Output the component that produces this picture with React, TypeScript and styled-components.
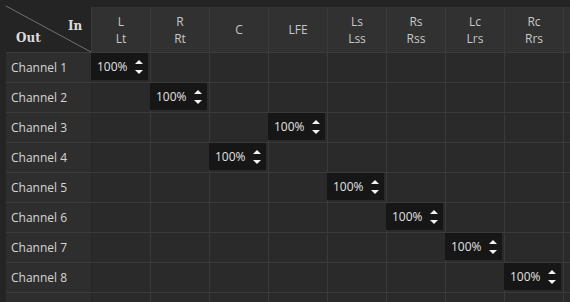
import React from 'react';
import styled, { createGlobalStyle } from 'styled-components';

const GlobalStyle = createGlobalStyle`
  html, body {
    margin: 0;
    padding: 0;
    background: #242424;
  }
  body {
    font-family: 'Open Sans', 'Liberation Sans', sans-serif;
  }
`;

const Page = styled.div`
  width: 570px;
  height: 302px;
  overflow: hidden;
  background: #242424;
  padding: 7px 0 0 6px;
  box-sizing: border-box;
`;

const Matrix = styled.div`
  display: grid;
  grid-template-columns: 85px repeat(9, 58px);
  grid-template-rows: 45px repeat(9, 29px);
  gap: 1px;
  width: max-content;
  background: #3a3a3a;
`;

const Corner = styled.div`
  position: relative;
  margin: -7px 0 0 -6px;
  background: #242424;
  border-right: 1px solid #242424;
  font-family: 'DejaVu Serif', 'Liberation Serif', serif;
  font-weight: bold;
  font-size: 12px;
  color: #dcdcdc;

  svg {
    position: absolute;
    inset: 0;
  }
`;

const CornerLabel = styled.span<{ $top: number; $left: number }>`
  position: absolute;
  top: ${(p) => p.$top}px;
  left: ${(p) => p.$left}px;
`;

const HeadCell = styled.div`
  display: flex;
  flex-direction: column;
  align-items: center;
  justify-content: center;
  background: #313131;
  color: #c8c8c8;
  font-size: 12px;
  line-height: 17px;
`;

const RowLabel = styled.div`
  display: flex;
  align-items: center;
  padding-left: 5px;
  background: #2e2e2e;
  color: #d6d6d6;
  font-size: 12px;
  border-right: 1px solid #242424;
  margin-right: -1px;
`;

const Cell = styled.div`
  position: relative;
  background: #2a2a2a;
`;

const Spin = styled.div`
  position: absolute;
  top: 0;
  left: -1px;
  width: 57px;
  height: 27px;
  display: flex;
  align-items: center;
  background: #161616;
  color: #e2e2e2;
  font-size: 12px;
  padding-left: 6px;
  box-sizing: border-box;
`;

const Arrows = styled.svg`
  margin-left: 7px;
`;

const inputs = [
  ['L', 'Lt'],
  ['R', 'Rt'],
  ['C'],
  ['LFE'],
  ['Ls', 'Lss'],
  ['Rs', 'Rss'],
  ['Lc', 'Lrs'],
  ['Rc', 'Rrs'],
  [''],
];

// output channel -> input column routed at 100%
const routing = [0, 1, 3, 2, 4, 5, 6, 7];

const SpinBox = ({ value }: { value: string }) => (
  <Spin>
    {value}
    <Arrows width="8" height="16" viewBox="0 0 8 16">
      <path d="M4 1 L8 5 H0 Z" fill="#f2f2f2" />
      <path d="M0 11 H8 L4 15 Z" fill="#f2f2f2" />
    </Arrows>
  </Spin>
);

const App = () => {
  const rows = Array.from({ length: 9 }, (_, i) => i);

  return (
    <Page>
      <GlobalStyle />
      <Matrix>
        <Corner>
          <svg width="92" height="53">
            <line x1="6" y1="6" x2="91" y2="52" stroke="#707070" strokeWidth="1" />
          </svg>
          <CornerLabel $top={19} $left={68}>In</CornerLabel>
          <CornerLabel $top={31} $left={16}>Out</CornerLabel>
        </Corner>
        {inputs.map((lines, i) => (
          <HeadCell key={`h${i}`}>
            {lines.map((t) => (
              <span key={t}>{t}</span>
            ))}
          </HeadCell>
        ))}
        {rows.map((r) => (
          <React.Fragment key={r}>
            <RowLabel>{r < 8 ? `Channel ${r + 1}` : ''}</RowLabel>
            {inputs.map((_, c) => (
              <Cell key={c}>{routing[r] === c && <SpinBox value="100%" />}</Cell>
            ))}
          </React.Fragment>
        ))}
      </Matrix>
    </Page>
  );
};

export default App;
